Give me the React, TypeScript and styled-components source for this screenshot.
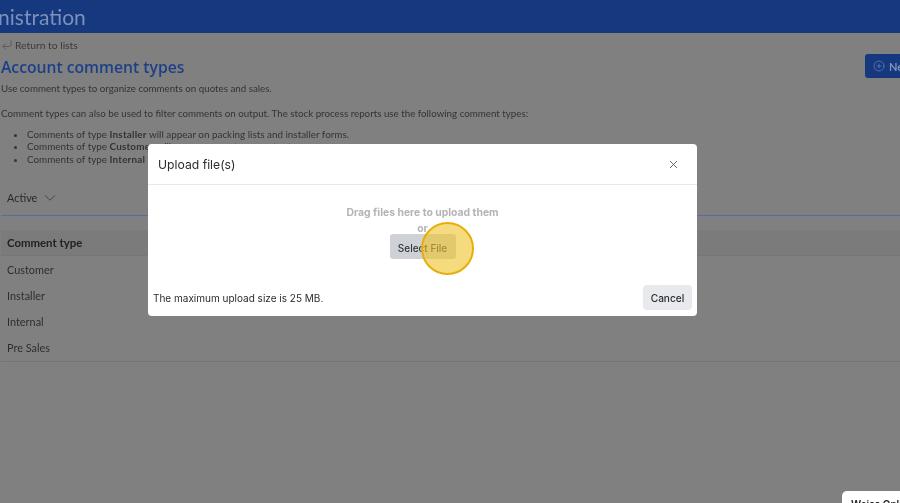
import React from "react";
import styled, { createGlobalStyle } from "styled-components";
import { ChevronDown, CirclePlus, CornerDownLeft, X } from "lucide-react";

const Global = createGlobalStyle`
  html, body { margin: 0; padding: 0; width: 900px; height: 503px; overflow: hidden; background: #808080; }
  * { box-sizing: border-box; }
`;

const Page = styled.div`
  position: relative;
  width: 900px;
  height: 503px;
  overflow: hidden;
  background: #808080;
  font-family: Lato, "Open Sans", sans-serif;
  color: #333;
  filter: blur(0.4px);
`;

const Banner = styled.header`
  height: 33px;
  background: #15387f;
  overflow: hidden;
  display: flex;
  align-items: center;
`;

const BannerTitle = styled.div`
  margin-left: -50px;
  font-size: 21px;
  line-height: 29px;
  color: #7d91b9;
  white-space: nowrap;
`;

const Content = styled.main`
  padding: 5px 0 0 1px;
`;

const TitleBar = styled.div`
  display: flex;
  justify-content: space-between;
  align-items: flex-start;
`;

const BackLink = styled.div`
  display: flex;
  align-items: center;
  gap: 2px;
  height: 13px;
  font-size: 10.3px;
  color: #3a3a3a;
`;

const PageTitle = styled.h1`
  margin: 5px 0 0;
  font-family: "Open Sans", sans-serif;
  font-size: 15.7px;
  line-height: 22px;
  font-weight: 600;
  color: #1c4088;
`;

const NewButton = styled.div`
  display: flex;
  align-items: center;
  gap: 4px;
  width: 40px;
  height: 24px;
  margin: 16px -5px 0 0;
  padding-left: 8px;
  border-radius: 3px 0 0 3px;
  background: #15387f;
  color: #7d91b9;
  font-size: 11px;
  font-weight: 700;
  overflow: hidden;
`;

const Paragraph = styled.p`
  margin: 4px 0 0;
  font-size: 9.75px;
  line-height: 13px;
  color: #333;
`;

const SecondParagraph = styled(Paragraph)`
  margin-top: 12px;
`;

const Notes = styled.ul`
  margin: 8px 0 0;
  padding-left: 26px;
  font-size: 9.9px;
  line-height: 12.4px;
  color: #333;

  b {
    letter-spacing: 0.2px;
  }
`;

const TabBar = styled.div`
  display: flex;
  align-items: center;
  gap: 4px;
  height: 38px;
  margin: 13px 0 0;
  padding: 2px 0 0 6px;
  border-bottom: 1px solid #4f6f9f;
  font-size: 10.9px;
  color: #2a2a2a;
`;

const Table = styled.div`
  margin-top: 14px;
  border-bottom: 1px solid #747474;
`;

const HeadRow = styled.div`
  display: flex;
  align-items: center;
  height: 26px;
  padding-left: 6px;
  background: #7b7b7b;
  border-bottom: 1px solid #767676;
  font-size: 11.4px;
  font-weight: 700;
  color: #222;
`;

const Row = styled.div`
  display: flex;
  align-items: center;
  height: 26.2px;
  padding-left: 6px;
  font-size: 10.9px;
  color: #2e2e2e;
`;

const Modal = styled.section`
  position: absolute;
  left: 148px;
  top: 144px;
  width: 549px;
  height: 172px;
  display: flex;
  flex-direction: column;
  background: #fff;
  border-radius: 4px;
  font-family: Inter, "Liberation Sans", sans-serif;
  color: #2b2b30;
`;

const ModalHead = styled.div`
  display: flex;
  align-items: center;
  justify-content: space-between;
  height: 41px;
  padding: 0 17px 0 10px;
  border-bottom: 1px solid #e8e8ea;
  font-size: 12.2px;
`;

const DropZone = styled.div`
  display: flex;
  flex-direction: column;
  align-items: center;
  padding-top: 21px;
  color: #b4b4b8;
  font-size: 10.4px;
  font-weight: 700;
  line-height: 13px;
  flex: 1;
`;

const OrLabel = styled.div`
  margin-top: 3px;
`;

const SelectButton = styled.div`
  display: flex;
  align-items: center;
  justify-content: center;
  width: 66px;
  height: 25px;
  margin-top: -1px;
  padding-top: 3px;
  border-radius: 3px;
  background: #ced1d6;
  color: #35353a;
  font-size: 10px;
  font-weight: 500;
`;

const ModalFoot = styled.div`
  display: flex;
  align-items: center;
  justify-content: space-between;
  padding: 0 5px 6px 5px;
  font-size: 10px;
`;

const CancelButton = styled.div`
  display: flex;
  align-items: center;
  justify-content: center;
  width: 49px;
  height: 25px;
  border-radius: 4px;
  background: #e8e9ec;
  font-size: 10.1px;
  font-weight: 500;
`;

const Spotlight = styled.div`
  position: absolute;
  left: 421px;
  top: 222px;
  width: 53px;
  height: 53px;
  border-radius: 50%;
  border: 2.5px solid #e6ae0c;
  background: rgba(240, 195, 40, 0.6);
`;

const ChatTab = styled.div`
  position: absolute;
  left: 842px;
  top: 491px;
  width: 70px;
  height: 20px;
  padding: 7px 0 0 9px;
  border-radius: 5px 0 0 0;
  background: #fff;
  font-family: Inter, "Liberation Sans", sans-serif;
  font-size: 10px;
  font-weight: 600;
  color: #222;
  white-space: nowrap;
`;

export default function App() {
  return (
    <Page>
      <Global />
      <Banner>
        <BannerTitle>Administration</BannerTitle>
      </Banner>
      <Content>
        <TitleBar>
          <div>
            <BackLink>
              <CornerDownLeft size={12} strokeWidth={1} />
              Return to lists
            </BackLink>
            <PageTitle>Account comment types</PageTitle>
          </div>
          <NewButton>
            <CirclePlus size={12} strokeWidth={1.2} style={{ flexShrink: 0 }} />
            New
          </NewButton>
        </TitleBar>
        <Paragraph>Use comment types to organize comments on quotes and sales.</Paragraph>
        <SecondParagraph>
          Comment types can also be used to filter comments on output. The stock process reports use the following comment types:
        </SecondParagraph>
        <Notes>
          <li>Comments of type <b>Installer</b> will appear on packing lists and installer forms.</li>
          <li>Comments of type <b>Customer</b> will appear on customer output.</li>
          <li>Comments of type <b>Internal</b> will not appear on output.</li>
        </Notes>
        <TabBar>
          Active
          <ChevronDown size={18} strokeWidth={0.9} />
        </TabBar>
        <Table>
          <HeadRow>Comment type</HeadRow>
          <Row>Customer</Row>
          <Row>Installer</Row>
          <Row>Internal</Row>
          <Row>Pre Sales</Row>
        </Table>
      </Content>
      <Modal>
        <ModalHead>
          Upload file(s)
          <X size={13} strokeWidth={1.6} color="#555" />
        </ModalHead>
        <DropZone>
          Drag files here to upload them
          <OrLabel>or</OrLabel>
          <SelectButton>Select File</SelectButton>
        </DropZone>
        <ModalFoot>
          The maximum upload size is 25 MB.
          <CancelButton>Cancel</CancelButton>
        </ModalFoot>
      </Modal>
      <Spotlight />
      <ChatTab>Weiss Online</ChatTab>
    </Page>
  );
}
